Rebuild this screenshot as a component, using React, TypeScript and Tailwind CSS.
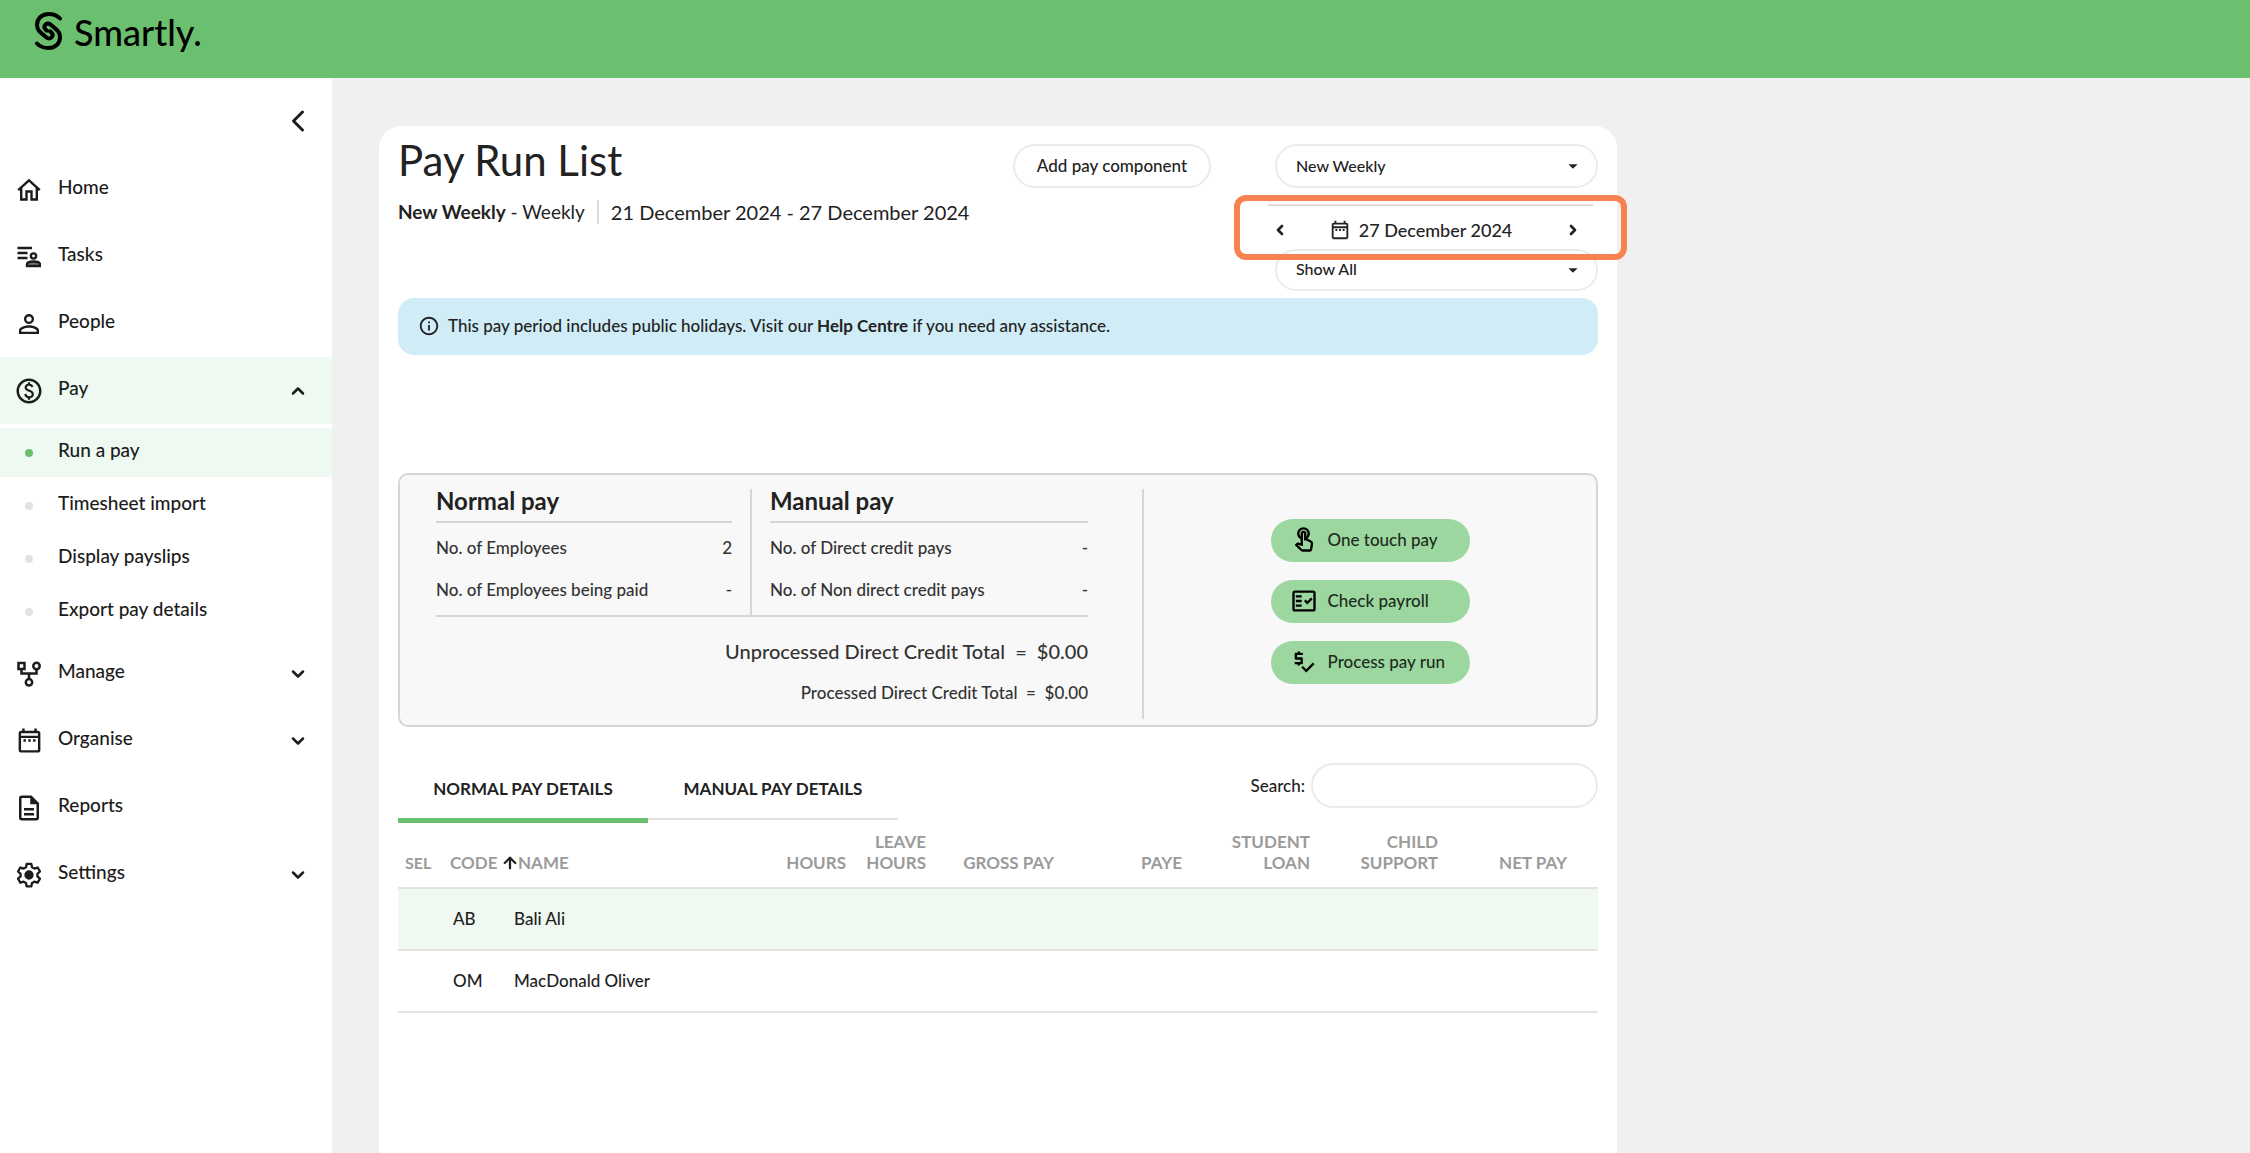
import type { ReactNode } from 'react';
import {
  MdArrowDropDown,
  MdInfoOutline,
  MdOutlineDateRange,
  MdOutlineDescription,
  MdOutlineFactCheck,
  MdOutlinePaid,
  MdOutlinePriceCheck,
  MdOutlineTouchApp,
  MdPersonOutline,
} from 'react-icons/md';
import { ArrowUp, ChevronDown, ChevronLeft, ChevronRight, ChevronUp } from 'lucide-react';

const LOGO_STROKE = 'M25 6.5C22 3.3 18 2 13.6 2 7 2 2 6.500 2 12.800c0 3.800 1.600 6.200 4.300 8.300l5.200 4.400c1.800 1.500 4 1.200 5.200-.2 1.400-1.700 1-3.600-.5-5l-1-.9';

function LogoMark() {
  return (
    <svg viewBox="0 0 27 38" className="h-[38px] w-[27px]" fill="none" stroke="currentColor" strokeWidth="4" strokeLinecap="round" aria-hidden="true">
      <path d={LOGO_STROKE} />
      <path d={LOGO_STROKE} transform="rotate(180 13.5 19)" />
    </svg>
  );
}

function HomeIcon() {
  return (
    <svg viewBox="0 0 24 24" className="size-6" fill="none" stroke="currentColor" strokeWidth="2.4" aria-hidden="true">
      <path d="M1.2 12.2 12 2.400l10.800 9.800M4.200 10v11.500h5.300v-8h5v8h5.300V10" />
    </svg>
  );
}

function TasksIcon() {
  return (
    <svg viewBox="0 0 24 24" className="size-6" fill="none" stroke="currentColor" strokeWidth="2.4" aria-hidden="true">
      <path d="M0.5 3h14.500M0.5 8h10M0.5 13h10" />
      <circle cx="16.5" cy="11" r="2.600" />
      <path d="M10 21v-1.500c0-2 3.500-3 6.500-3s6.500 1 6.500 3V21z" fill="currentColor" fillOpacity="0.6" />
    </svg>
  );
}

function ManageIcon() {
  return (
    <svg viewBox="0 0 24 26" className="h-[26px] w-6" fill="none" stroke="currentColor" strokeWidth="2.5" aria-hidden="true">
      <path d="M1.5 2h6v6h-6zM4.500 8v4.500h15V8M12 12.500V18" />
      <circle cx="19.5" cy="5" r="3.200" />
      <circle cx="12" cy="21.3" r="3.200" />
    </svg>
  );
}

function SettingsIcon() {
  return (
    <svg viewBox="0 0 24 24" className="size-7" fill="none" stroke="currentColor" strokeWidth="2" strokeLinejoin="round" aria-hidden="true">
      <path d="M10 2.500h4l.6 2.900 2 1.100 2.800-.9 2 3.400-2.200 2v2.200l2.200 2-2 3.400-2.800-.9-2 1.100-.6 2.900h-4l-.6-2.900-2-1.100-2.800.9-2-3.400 2.200-2V11l-2.200-2 2-3.400 2.800.9 2-1.100z" />
      <circle cx="12" cy="12" r="3" fill="currentColor" />
    </svg>
  );
}

type NavItem = {
  label: string;
  icon: ReactNode;
  expandable?: boolean;
};

const topItems: NavItem[] = [
  { label: 'Home', icon: <HomeIcon /> },
  { label: 'Tasks', icon: <TasksIcon /> },
  { label: 'People', icon: <MdPersonOutline size={30} /> },
];

const paySubItems = ['Run a pay', 'Timesheet import', 'Display payslips', 'Export pay details'];

const bottomItems: NavItem[] = [
  { label: 'Manage', icon: <ManageIcon />, expandable: true },
  { label: 'Organise', icon: <MdOutlineDateRange size={29} />, expandable: true },
  { label: 'Reports', icon: <MdOutlineDescription size={30} /> },
  { label: 'Settings', icon: <SettingsIcon />, expandable: true },
];

const employees = [
  { code: 'AB', name: 'Bali Ali' },
  { code: 'OM', name: 'MacDonald Oliver' },
];

const amountColumns = ['Gross pay', 'PAYE', 'Student loan', 'Child support'];

function NavRow({ item }: { item: NavItem }) {
  return (
    <li>
      <a href="#" className="flex h-[67px] items-center pr-6">
        <span className="flex w-[58px] justify-center">{item.icon}</span>
        <span className="flex-1 pb-1">{item.label}</span>
        {item.expandable && <ChevronDown size={20} strokeWidth={3} />}
      </a>
    </li>
  );
}

function Sidebar() {
  return (
    <nav className="w-[332px] shrink-0 bg-white text-[19px] font-medium text-[#1c1c1c]">
      <div className="flex h-[78px] items-center justify-end pt-2 pr-4">
        <button type="button" aria-label="Collapse menu">
          <ChevronLeft size={36} strokeWidth={2} />
        </button>
      </div>
      <ul>
        {topItems.map((item) => (
          <NavRow key={item.label} item={item} />
        ))}
        <li>
          <button type="button" aria-expanded="true" className="flex h-[67px] w-full items-center bg-[#edf9f1] pr-6 text-left">
            <span className="flex w-[58px] justify-center">
              <MdOutlinePaid size={30} />
            </span>
            <span className="flex-1 pb-1">Pay</span>
            <ChevronUp size={20} strokeWidth={3} />
          </button>
          <ul className="flex flex-col gap-1 py-1">
            {paySubItems.map((label, index) => (
              <li key={label}>
                <a href="#" className={index === 0 ? 'flex h-[49px] items-center bg-[#edf9f1]' : 'flex h-[49px] items-center'}>
                  <span className="flex w-[58px] justify-center">
                    <span className={index === 0 ? 'size-2 rounded-full bg-[#6abf6e]' : 'size-2 rounded-full bg-[#e2e2e2]'} />
                  </span>
                  <span className="pb-1">{label}</span>
                </a>
              </li>
            ))}
          </ul>
        </li>
        {bottomItems.map((item) => (
          <NavRow key={item.label} item={item} />
        ))}
      </ul>
    </nav>
  );
}

function PillSelect({ label, option, className }: { label: string; option: string; className: string }) {
  return (
    <div className="relative">
      <select aria-label={label} className={`w-full appearance-none rounded-full border-2 border-[#ebebeb] bg-white px-[19px] text-base font-medium ${className}`}>
        <option>{option}</option>
      </select>
      <MdArrowDropDown size={22} className="pointer-events-none absolute inset-y-0 right-[14px] my-auto" />
    </div>
  );
}

function DateStepper() {
  return (
    <div className="relative mt-4 mr-[5px] -ml-[7px]">
      <div className="flex h-[45px] items-center justify-between border-t-2 border-[#dedede] pt-1 pr-3 pl-1">
        <button type="button" aria-label="Previous period">
          <ChevronLeft size={16} strokeWidth={4} />
        </button>
        <button type="button" className="flex items-center gap-2 pr-3 text-lg leading-6 font-medium">
          <MdOutlineDateRange size={22} />
          27 December 2024
        </button>
        <button type="button" aria-label="Next period">
          <ChevronRight size={16} strokeWidth={4} />
        </button>
      </div>
      <div className="pointer-events-none absolute -inset-x-[34px] -top-[9px] -bottom-[11px] z-10 rounded-xl border-6 border-[#f5824f]" />
    </div>
  );
}

function SummaryColumn({ title, rows, className }: { title: string; rows: [string, string][]; className: string }) {
  return (
    <section className={className}>
      <h2 className="border-b-2 border-[#d6d6d6] pb-2 text-2xl leading-6 font-bold text-[#222]">{title}</h2>
      <dl className="flex flex-col pt-1 text-[17px] font-medium">
        {rows.map(([label, value]) => (
          <div key={label} className="flex h-[42px] items-center justify-between">
            <dt>{label}</dt>
            <dd>{value}</dd>
          </div>
        ))}
      </dl>
    </section>
  );
}

function ActionButton({ icon, children }: { icon: ReactNode; children: ReactNode }) {
  return (
    <button type="button" className="flex h-[43px] w-[199px] items-center rounded-full bg-[#9dd7a0] pb-[2px] pl-4 text-[17px] font-medium text-[#1d2b1e]">
      <span className="flex w-[41px] pl-[3px] text-black">{icon}</span>
      {children}
    </button>
  );
}

function PaySummary() {
  return (
    <div className="mt-[118px] flex h-[254px] rounded-[10px] border-2 border-[#d6d6d6] bg-[#f8f8f8] pl-9 text-[#333]">
      <div className="w-[652px] pt-[14px]">
        <div className="flex border-b-2 border-[#d6d6d6]">
          <SummaryColumn
            title="Normal pay"
            className="w-[296px]"
            rows={[
              ['No. of Employees', '2'],
              ['No. of Employees being paid', '-'],
            ]}
          />
          <SummaryColumn
            title="Manual pay"
            className="ml-[18px] flex-1 border-l-2 border-[#d6d6d6] pb-1 pl-[18px]"
            rows={[
              ['No. of Direct credit pays', '-'],
              ['No. of Non direct credit pays', '-'],
            ]}
          />
        </div>
        <p className="mt-5 text-right text-xl leading-7 font-medium whitespace-pre">Unprocessed Direct Credit Total  =  $0.00</p>
        <p className="mt-4 text-right text-[17px] leading-6 font-medium whitespace-pre">Processed Direct Credit Total  =  $0.00</p>
      </div>
      <div className="mt-[14px] mb-[6px] ml-[54px] flex flex-1 flex-col items-center gap-[18px] border-l-2 border-[#d6d6d6] pt-[30px]">
        <ActionButton icon={<MdOutlineTouchApp size={28} />}>One touch pay</ActionButton>
        <ActionButton icon={<MdOutlineFactCheck size={28} />}>Check payroll</ActionButton>
        <ActionButton icon={<MdOutlinePriceCheck size={28} />}>Process pay run</ActionButton>
      </div>
    </div>
  );
}

function PayTable() {
  return (
    <table className="w-full table-fixed text-left text-[17px]">
      <thead>
        <tr className="h-[65px] border-b-2 border-[#e2e4e3] align-bottom leading-[21px] text-[#9b9b9b] uppercase">
          <th className="w-[52px] pb-[14px] pl-[7px] text-base leading-[21px]">Sel</th>
          <th className="w-16 pb-[14px]" aria-sort="ascending">
            <span className="flex items-center gap-1">
              Code
              <ArrowUp size={18} strokeWidth={3} className="shrink-0 text-[#222]" />
            </span>
          </th>
          <th className="pb-[14px] pl-1">Name</th>
          <th className="w-[100px] pb-[14px] text-right">Hours</th>
          <th className="w-20 pb-[14px] pl-4 text-right">Leave hours</th>
          {amountColumns.map((column) => (
            <th key={column} className="w-32 pb-[14px] pl-4 text-right">
              {column}
            </th>
          ))}
          <th className="w-40 pr-[31px] pb-[14px] text-right">Net pay</th>
        </tr>
      </thead>
      <tbody className="font-medium text-[#1f1f1f]">
        {employees.map((employee) => (
          <tr key={employee.code} className="h-[62px] border-b-2 border-[#e2e4e3] odd:bg-[#eff8f1]">
            <td />
            <td className="pl-[3px]">{employee.code}</td>
            <td>{employee.name}</td>
            <td colSpan={7} />
          </tr>
        ))}
      </tbody>
    </table>
  );
}

export default function App() {
  return (
    <div className="flex min-h-screen flex-col bg-[#f0f0f0] font-['Lato','Liberation_Sans',sans-serif] text-[#222]">
      <header className="flex h-[78px] items-start gap-3 bg-[#6bc06f] pt-3 pl-[35px] text-black">
        <LogoMark />
        <span className="text-4xl leading-10 font-medium">Smartly.</span>
      </header>
      <div className="flex flex-1">
        <Sidebar />
        <main className="flex flex-1 flex-col pt-12 pr-12 pl-[47px]">
          <div className="w-full max-w-[1238px] flex-1 rounded-t-[22px] bg-white px-[19px] pt-[18px]">
            <div className="flex">
              <div className="flex-1">
                <h1 className="text-[42px] leading-8">Pay Run List</h1>
                <p className="mt-6 flex h-6 items-center text-[19px]">
                  <span>
                    <strong>New Weekly</strong> - Weekly
                  </span>
                  <span className="ml-3 flex h-6 items-center border-l-2 border-[#dcdcdc] pl-3 text-xl">21 December 2024 - 27 December 2024</span>
                </p>
              </div>
              <button type="button" className="h-11 w-[198px] rounded-full border-2 border-[#ebebeb] text-[17px] font-medium">
                Add pay component
              </button>
              <div className="ml-16 w-[323px]">
                <PillSelect label="Pay group" option="New Weekly" className="h-11" />
                <DateStepper />
                <PillSelect label="Employee filter" option="Show All" className="h-[42px] pb-[2px]" />
              </div>
            </div>
            <div className="mt-[7px] flex h-[57px] items-center gap-2 rounded-2xl bg-[#d0edf7] px-5 pb-[2px] text-[17px] font-medium">
              <MdInfoOutline size={22} />
              <p>
                This pay period includes public holidays. Visit our{' '}
                <a href="#" className="font-bold">
                  Help Centre
                </a>{' '}
                if you need any assistance.
              </p>
            </div>
            <PaySummary />
            <div className="mt-9 flex justify-between">
              <div role="tablist" className="flex items-start">
                <button type="button" role="tab" aria-selected="true" className="h-[60px] w-[250px] border-b-5 border-[#6abf6e] pb-[3px] text-[17px] font-bold uppercase">
                  Normal pay details
                </button>
                <button type="button" role="tab" aria-selected="false" className="h-[57px] w-[250px] border-b-2 border-[#e2e2e2] pb-[3px] text-[17px] font-bold uppercase">
                  Manual pay details
                </button>
              </div>
              <div className="flex h-[45px] items-center gap-[6px] text-[17px] font-medium">
                <label htmlFor="search">Search:</label>
                <input id="search" type="search" className="h-full w-[287px] rounded-full border-2 border-[#ebebeb] px-5" />
              </div>
            </div>
            <PayTable />
          </div>
        </main>
      </div>
    </div>
  );
}
